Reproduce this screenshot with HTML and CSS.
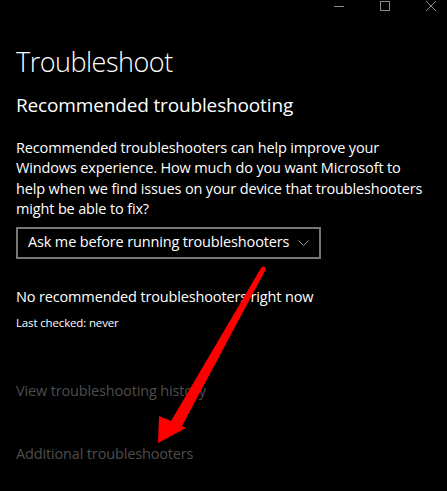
FILE: index.html
```html
<!DOCTYPE html>
<html lang="en">
<head>
<meta charset="utf-8">
<title>Troubleshoot</title>
<link rel="stylesheet" href="styles.css">
</head>
<body>
<div class="window">
  <div class="titlebar">
    <div class="cap-btn">
      <svg width="10" height="10" viewBox="0 0 10 10"><line x1="0" y1="5.5" x2="10" y2="5.5" class="glyph"/></svg>
    </div>
    <div class="cap-btn">
      <svg width="10" height="10" viewBox="0 0 10 10"><rect x="0.5" y="0.5" width="9" height="9" class="glyph" fill="none"/></svg>
    </div>
    <div class="cap-btn">
      <svg width="10" height="10" viewBox="0 0 10 10"><path d="M0 0 L10 10 M10 0 L0 10" class="glyph"/></svg>
    </div>
  </div>

  <main class="content">
    <h1 class="page-title">Troubleshoot</h1>
    <h2 class="section-title">Recommended troubleshooting</h2>
    <p class="description">Recommended troubleshooters can help improve your<br>Windows experience. How much do you want Microsoft to<br>help when we find issues on your device that troubleshooters<br>might be able to fix?</p>

    <div class="dropdown">
      <span class="dropdown-label">Ask me before running troubleshooters</span>
      <svg class="chevron" width="11" height="6" viewBox="0 0 11 6"><path d="M0.5 0.5 L5.5 5.5 L10.5 0.5" fill="none"/></svg>
    </div>

    <p class="status">No recommended troubleshooters right now</p>
    <p class="last-checked">Last checked: never</p>

    <a class="link link-history">View troubleshooting history</a>
    <a class="link link-additional">Additional troubleshooters</a>
  </main>

  <svg class="annotation" width="447" height="491" viewBox="0 0 447 491">
    <polygon points="261,268 264,266 266,269 182,426 186,428 158,443 159,416 171,421" class="arrow"/>
  </svg>
</div>
</body>
</html>
```

FILE: styles.css
```css
html, body {
  margin: 0;
  padding: 0;
  background: #000;
}

body {
  width: 447px;
  height: 491px;
  overflow: hidden;
  font-family: "Open Sans", "Noto Sans", "Liberation Sans", sans-serif;
  color: #fff;
}

.window {
  position: relative;
  width: 447px;
  height: 491px;
  overflow: hidden;
}

.titlebar {
  display: flex;
  justify-content: flex-end;
  height: 12px;
  margin-right: -7px;
}

.cap-btn {
  width: 46px;
  height: 12px;
  display: flex;
  align-items: center;
  justify-content: center;
}

.cap-btn svg {
  display: block;
}

.glyph {
  stroke: #8a8a8a;
  stroke-width: 1;
}

.content {
  padding-left: 16px;
  display: flex;
  flex-direction: column;
  align-items: flex-start;
}

.page-title {
  margin: 32px 0 0;
  font-size: 27px;
  line-height: 36px;
  font-weight: 300;
  letter-spacing: -0.5px;
}

.section-title {
  margin: 12px 0 0;
  font-size: 19px;
  line-height: 26px;
  font-weight: 400;
  letter-spacing: -0.15px;
}

.description {
  margin: 20px 0 0;
  font-size: 14.5px;
  line-height: 20.4px;
  letter-spacing: -0.15px;
  white-space: nowrap;
}

.dropdown {
  box-sizing: border-box;
  margin-top: 7px;
  width: 305px;
  height: 32px;
  border: 2px solid #767676;
  padding: 0 10px 2px 10px;
  display: flex;
  align-items: center;
  justify-content: space-between;
}

.dropdown-label {
  font-size: 14.5px;
  line-height: 26px;
  letter-spacing: -0.15px;
  white-space: nowrap;
}

.chevron {
  flex-shrink: 0;
  display: block;
  margin-top: 2px;
}

.chevron path {
  stroke: #9a9a9a;
  stroke-width: 1;
}

.status {
  margin: 28px 0 0;
  font-size: 14.5px;
  line-height: 20px;
  letter-spacing: -0.15px;
}

.last-checked {
  margin: 8px 0 0;
  font-size: 11.5px;
  line-height: 16px;
  letter-spacing: -0.15px;
}

.link {
  display: block;
  font-size: 14.5px;
  line-height: 20px;
  letter-spacing: -0.15px;
  color: #4d4d4d;
}

.link-history {
  margin-top: 50px;
}

.link-additional {
  margin-top: 43px;
}

.annotation {
  position: absolute;
  left: 0;
  top: 0;
  pointer-events: none;
}

.arrow {
  fill: #ff0000;
}
```
